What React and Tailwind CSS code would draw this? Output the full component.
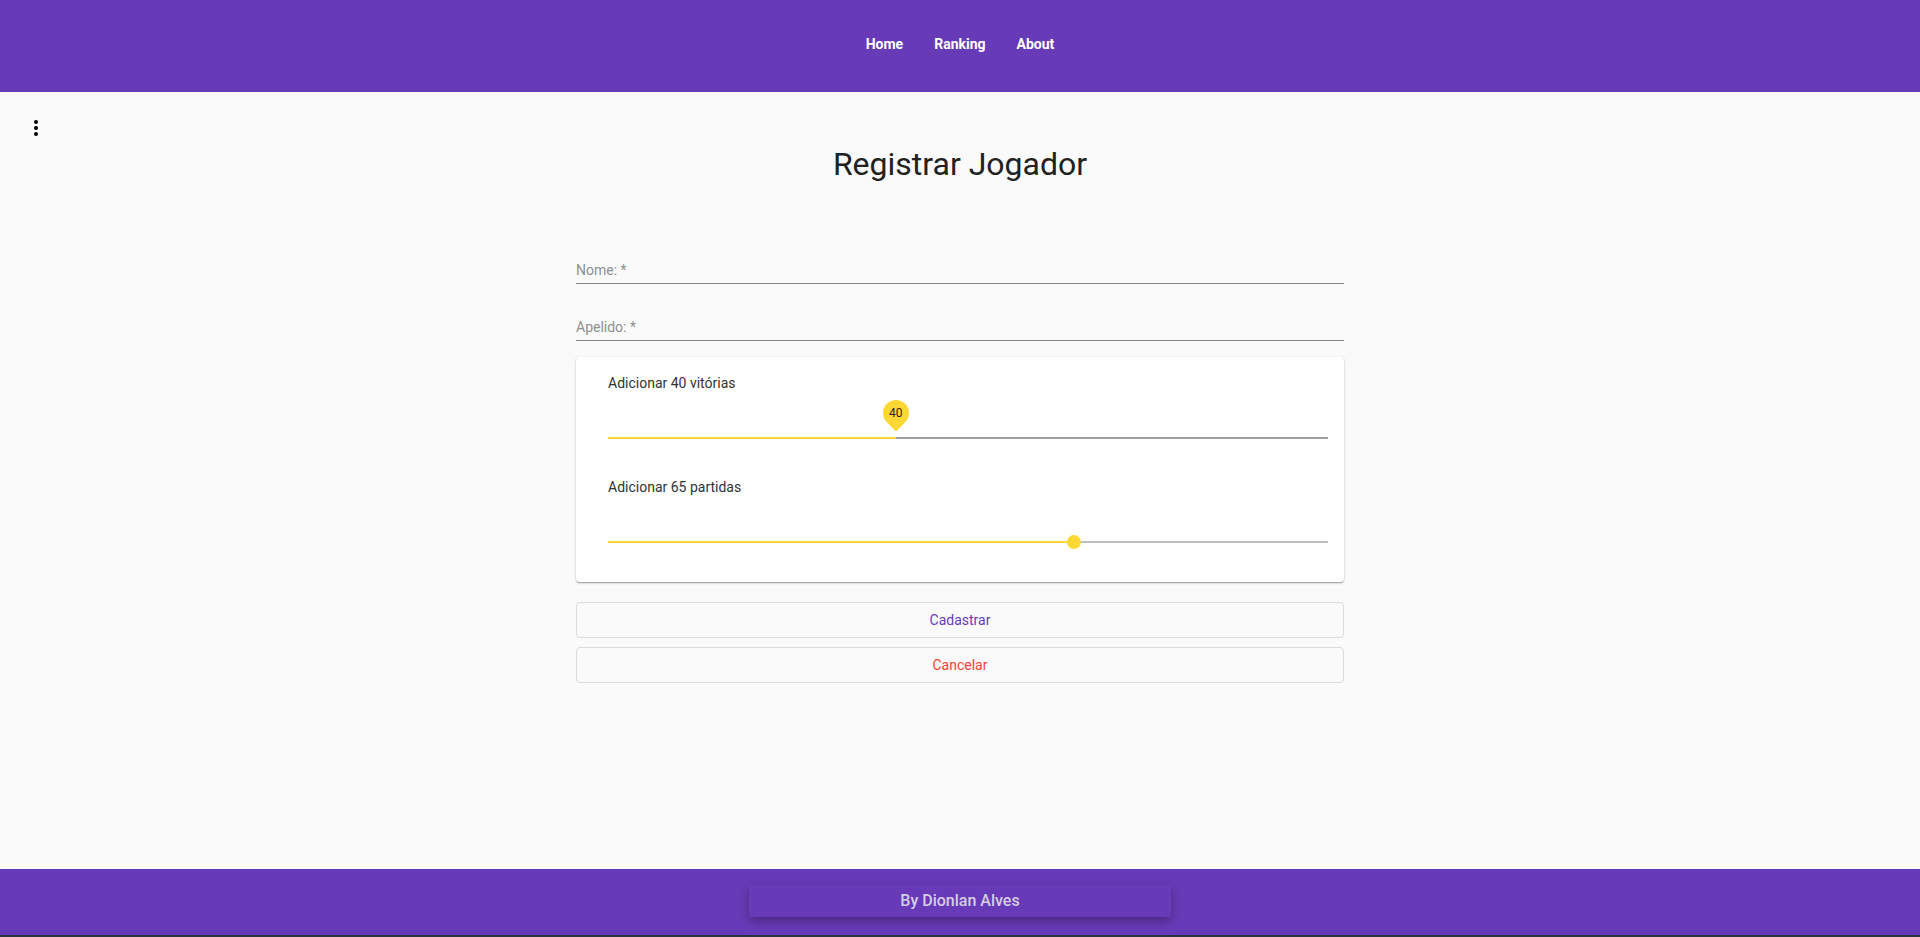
import React from 'react';

const font = { fontFamily: 'Roboto, "Liberation Sans", sans-serif' };

const MoreVert = () => (
  <svg width="24" height="24" viewBox="0 0 24 24" fill="currentColor">
    <circle cx="12" cy="6" r="2" />
    <circle cx="12" cy="12" r="2" />
    <circle cx="12" cy="18" r="2" />
  </svg>
);

const Field = ({ label, className = '' }) => (
  <div className={`border-b border-[#8a8a8a] pt-[2px] pb-[3px] ${className}`}>
    <span className="block text-[14px] leading-5 text-[#8f8f8f]">{label}</span>
  </div>
);

const Slider = ({ label, value, showPin, restColor, boxHeight }) => (
  <div>
    <p className="text-[14px] leading-5 text-[#333]">{label}</p>
    <div className={`relative ${boxHeight}`}>
      {/* track */}
      <div className="absolute left-0 right-0 top-[44px] h-[2px] flex">
        <div className="h-full bg-[#fdd835]" style={{ width: `${value}%` }} />
        <div className={`h-full flex-1 ${restColor}`} />
      </div>
      {showPin ? (
        <div
          className="absolute top-[7px] w-[26px] h-[26px] bg-[#fdd835] rounded-[50%_50%_50%_0] -rotate-45 flex items-center justify-center"
          style={{ left: `calc(${value}% - 13px)` }}
        >
          <span className="rotate-45 text-[12px] text-[#222] leading-none">{value}</span>
        </div>
      ) : (
        <div
          className="absolute top-[38px] w-[14px] h-[14px] rounded-full bg-[#fdd835]"
          style={{ left: `calc(${value}% - 9px)` }}
        />
      )}
    </div>
  </div>
);

export default function App() {
  return (
    <div className="h-screen flex flex-col bg-[#fafafa] overflow-hidden" style={font}>
      <header className="h-[92px] shrink-0 bg-[#673ab7] flex items-center justify-center pb-1">
        <nav className="flex items-center gap-[31px] text-[14px] font-bold text-white">
          <a href="#">Home</a>
          <a href="#">Ranking</a>
          <a href="#">About</a>
        </nav>
      </header>

      <main className="relative flex-1 pt-[53px]">
        <button className="absolute left-6 top-6 text-black">
          <MoreVert />
        </button>

        <h1 className="text-center text-[32px] leading-[38px] font-normal text-[#212121]">
          Registrar Jogador
        </h1>

        <div className="w-[768px] mx-auto mt-[75px]">
          <Field label="Nome: *" />
          <Field label="Apelido: *" className="mt-[31px]" />

          <div className="mt-[16px] bg-white rounded shadow-[0_1px_3px_rgba(0,0,0,0.2),0_1px_1px_rgba(0,0,0,0.14),0_2px_1px_-1px_rgba(0,0,0,0.12)] pl-8 pr-4 pt-4 pb-[2px]">
            <Slider label="Adicionar 40 vitórias" value={40} showPin restColor="bg-[#9e9e9e]" boxHeight="h-[84px]" />
            <Slider label="Adicionar 65 partidas" value={65} restColor="bg-[#bdbdbd]" boxHeight="h-[83px]" />
          </div>

          <div className="mt-5 flex flex-col gap-[9px]">
            <button className="h-9 w-full rounded border border-[#dcdcdc] text-[14px] text-[#673ab7]">
              Cadastrar
            </button>
            <button className="h-9 w-full rounded border border-[#dcdcdc] text-[14px] text-[#f44336]">
              Cancelar
            </button>
          </div>
        </div>
      </main>

      <footer className="h-[66px] shrink-0 bg-[#673ab7] flex justify-center pt-4">
        <div className="w-[422px] h-8 bg-[#673ab7] shadow-[0_4px_10px_rgba(0,0,0,0.3)] flex items-center justify-center text-[16px] font-medium text-[#d6cde6]">
          By Dionlan Alves
        </div>
      </footer>
      <div className="h-[2px] shrink-0 bg-[#2a3644]" />
    </div>
  );
}
